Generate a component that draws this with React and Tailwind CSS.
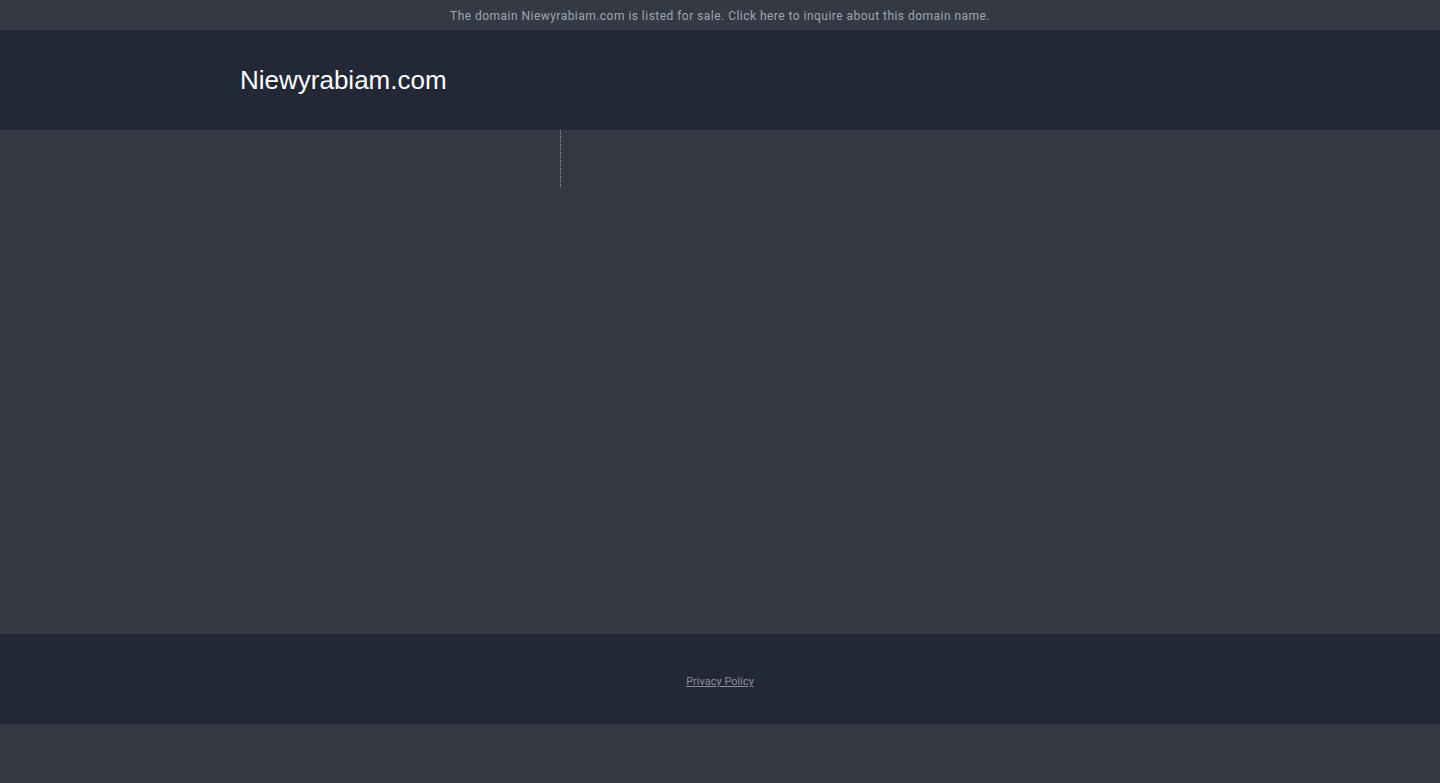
export default function App() {
  return (
    <div className="min-h-[783px] bg-[#353843]" style={{ fontFamily: '"Liberation Sans", Arial, sans-serif' }}>
      <div className="h-[30px] bg-[#353944] flex items-center justify-center pt-[2px]">
        <a className="text-[12px] text-[#9fa5b0] tracking-[0.47px]" style={{ fontFamily: 'Roboto, "Liberation Sans", sans-serif' }}>
          The domain Niewyrabiam.com is listed for sale. Click here to inquire about this domain name.
        </a>
      </div>
      <div className="h-[100px] bg-[#222835] flex items-center pl-[240px]">
        <h1 className="text-[26px] text-white leading-none">Niewyrabiam.com</h1>
      </div>
      <div className="h-[504px] bg-[#353843]">
        <div className="ml-[560px] h-[57px] border-l border-dotted border-[#9a9ea8]" />
      </div>
      <div className="h-[90px] bg-[#222835] flex items-center justify-center pt-[7px]">
        <a className="text-[11px] text-[#8a8e98] underline" style={{ fontFamily: 'Roboto, "Liberation Sans", sans-serif' }}>Privacy Policy</a>
      </div>
    </div>
  );
}
